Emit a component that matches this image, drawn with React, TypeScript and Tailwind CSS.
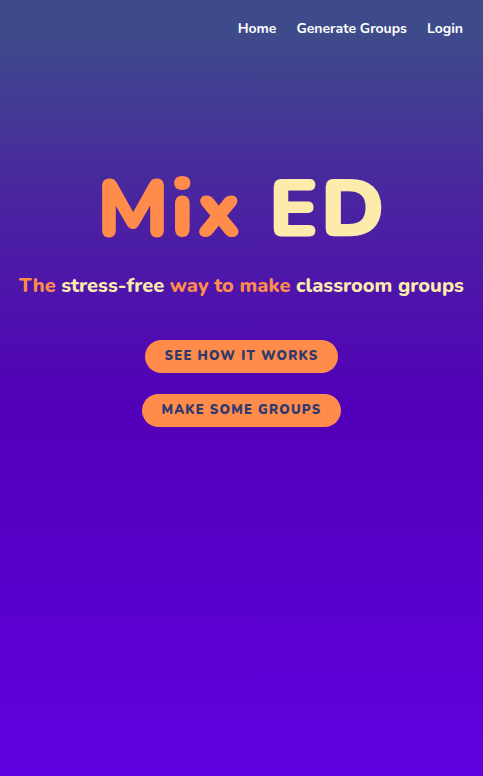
import React from "react";

export default function App() {
  const font = { fontFamily: '"Nunito", "Lato", "Noto Sans", sans-serif' };
  return (
    <div
      className="min-h-[776px] w-full bg-[linear-gradient(to_bottom,#3e4b8a_4%,#4a24a0_26%,#5200b8_52%,#6000e0_100%)]"
      style={font}
    >
      <nav className="flex justify-end gap-5 pr-5 pt-[20px]">
        <a className="text-[14px] font-bold leading-[18px] text-white">Home</a>
        <a className="text-[14px] font-bold leading-[18px] text-white">Generate Groups</a>
        <a className="text-[14px] font-bold leading-[18px] text-white">Login</a>
      </nav>
      <div className="flex flex-col items-center">
        <h1 className="mt-[121px] text-[82px] font-black leading-[100px] tracking-[1.5px]">
          <span className="text-[#ff8c4b]">Mix</span>{" "}
          <span className="text-[#fcebab]">ED</span>
        </h1>
        <p className="mt-[15px] whitespace-nowrap text-[20px] font-extrabold leading-[24px] text-[#fcebab]">
          <span className="text-[#ff8c4b]">The</span> stress-free{" "}
          <span className="text-[#ff8c4b]">way to make</span> classroom groups
        </p>
        <button className="mt-[42px] h-[33px] w-[193px] rounded-full bg-[#ff8c4b] text-[13px] font-black uppercase tracking-[1.2px] text-[#2f3a6e]">
          See how it works
        </button>
        <button className="mt-[21px] h-[33px] w-[199px] rounded-full bg-[#ff8c4b] text-[13px] font-black uppercase tracking-[1.2px] text-[#2f3a6e]">
          Make some groups
        </button>
      </div>
    </div>
  );
}
